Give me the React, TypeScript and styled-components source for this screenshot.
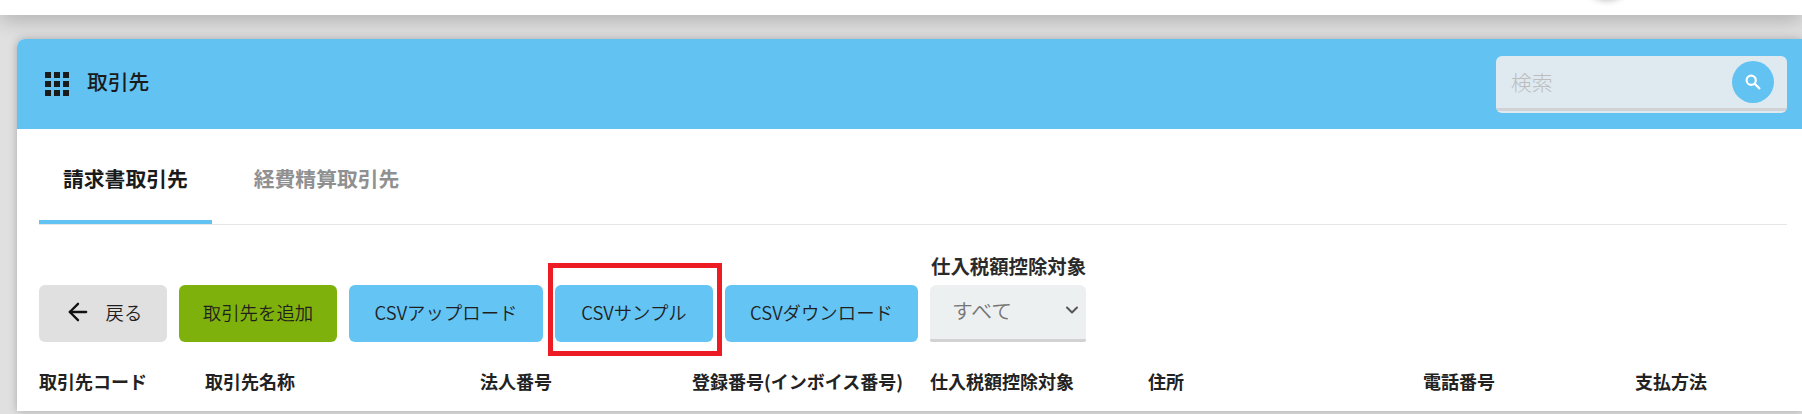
import styled, { createGlobalStyle } from 'styled-components'
import { ArrowLeft, ChevronDown } from 'lucide-react'

const GlobalStyle = createGlobalStyle`
    html, body {
        margin: 0;
        padding: 0;
        width: 1802px;
        height: 414px;
        overflow: hidden;
        background: #e0e0e0;
        font-family: "Noto Sans CJK JP", "Noto Sans", sans-serif;
    }
`

const Page = styled.div`
    position: relative;
    width: 1802px;
    height: 414px;
    overflow: hidden;
`

const TopBar = styled.div`
    position: relative;
    height: 15px;
    background: #fff;
    box-shadow: 0 2px 22px rgba(0, 0, 0, 0.32);
    z-index: 1;
`

const AvatarShadow = styled.div`
    position: absolute;
    left: 1583px;
    top: -50px;
    width: 48px;
    height: 48px;
    border-radius: 50%;
    background: #fff;
    box-shadow: 0 2px 7px rgba(0, 0, 0, 0.3);
`

const Card = styled.div`
    margin: 24px 0 0 17px;
    background: #fff;
    border-radius: 8px 0 0 0;
    box-shadow: 0 0 8px rgba(0, 0, 0, 0.25);
    height: 372px;
`

const CardHeader = styled.div`
    display: flex;
    align-items: center;
    justify-content: space-between;
    height: 90px;
    padding: 0 15px 0 28px;
    background: #62c2f2;
    border-radius: 8px 0 0 0;
`

const HeaderTitle = styled.div`
    display: flex;
    align-items: center;
    gap: 18px;
    font-size: 20.8px;
    font-weight: 500;
    line-height: 24px;
    color: #1a1a1a;
`

const TitleText = styled.span`
    margin-top: -6px;
`

const SearchBox = styled.div`
    display: flex;
    align-items: center;
    justify-content: space-between;
    box-sizing: border-box;
    width: 291px;
    height: 57px;
    padding: 0 13px 5px 15px;
    background: #dfe9f0;
    border-radius: 6px;
    position: relative;
    overflow: hidden;

    &::after {
        content: '';
        position: absolute;
        left: 0;
        right: 0;
        bottom: 2px;
        height: 3px;
        background: #d0d2d6;
    }
`

const SearchPlaceholder = styled.span`
    font-size: 20.8px;
    font-weight: 300;
    color: #bdbdbd;
`

const SearchButton = styled.div`
    display: flex;
    align-items: center;
    justify-content: center;
    width: 42px;
    height: 42px;
    border-radius: 50%;
    background: #62c2f2;
`

const CardBody = styled.div`
    padding: 0 15px 0 22px;
`

const Tabs = styled.div`
    display: flex;
    gap: 18px;
    height: 96px;
    box-sizing: border-box;
    border-bottom: 1px solid #e6e6e6;
`

const Tab = styled.div<{ $active?: boolean }>`
    display: flex;
    align-items: center;
    box-sizing: border-box;
    height: 95px;
    padding: 6px 24px 0;
    font-size: 20.8px;
    font-weight: 700;
    color: ${(p) => (p.$active ? '#1a1a1a' : '#909090')};
    border-bottom: 4px solid ${(p) => (p.$active ? '#62c2f2' : 'transparent')};
    border-radius: 3px 3px 0 0;
`

const Toolbar = styled.div`
    display: flex;
    align-items: flex-end;
    gap: 12px;
    height: 117px;
`

const Button = styled.div<{ $bg: string; $width: number }>`
    display: flex;
    align-items: center;
    justify-content: center;
    gap: 14px;
    box-sizing: border-box;
    width: ${(p) => p.$width}px;
    height: 57px;
    padding-bottom: 4px;
    background: ${(p) => p.$bg};
    border-radius: 6px;
    font-size: 18.4px;
    font-weight: 350;
    color: #1f1f1f;
`

const SelectField = styled.div`
    display: flex;
    flex-direction: column;
    width: 156px;
`

const SelectLabel = styled.div`
    font-size: 19.4px;
    font-weight: 700;
    line-height: 24px;
    margin: 0 0 7px 1px;
    white-space: nowrap;
    color: #2a2a2a;
`

const Select = styled.div`
    display: flex;
    align-items: center;
    justify-content: space-between;
    box-sizing: border-box;
    height: 57px;
    padding: 0 4px 4px 22px;
    background: #edf0f1;
    border-bottom: 3px solid #d2d2d2;
    border-radius: 6px 6px 2px 2px;
    font-size: 20.8px;
    font-weight: 350;
    color: #757575;
`

const HeaderRow = styled.div`
    display: grid;
    grid-template-columns: 166px 275px 212px 238px 218px 275px 212px 1fr;
    align-items: center;
    height: 77px;
    font-size: 18px;
    font-weight: 700;
    color: #222;
    white-space: nowrap;
`

const Highlight = styled.div`
    position: absolute;
    left: 548px;
    top: 263px;
    width: 174px;
    height: 93px;
    box-sizing: border-box;
    border: 5px solid #ed1c24;
    pointer-events: none;
`

const columns = ['取引先コード', '取引先名称', '法人番号', '登録番号(インボイス番号)', '仕入税額控除対象', '住所', '電話番号', '支払方法']

const AppsIcon = () => (
    <svg width="24" height="24" viewBox="0 0 24 24" fill="#1a1a1a">
        {[0, 9, 18].map((y) =>
            [0, 9, 18].map((x) => <rect key={`${x}-${y}`} x={x} y={y} width="6" height="6" />),
        )}
    </svg>
)

const SearchIcon = () => (
    <svg width="20" height="20" viewBox="0 0 20 20" fill="none" stroke="#fff" strokeWidth="2.2">
        <circle cx="8.2" cy="8.2" r="4.6" />
        <path d="M11.6 11.6 L17 17" />
    </svg>
)

const App = () => {
    return (
        <Page>
            <GlobalStyle />
            <TopBar>
                <AvatarShadow />
            </TopBar>
            <Card>
                <CardHeader>
                    <HeaderTitle>
                        <AppsIcon />
                        <TitleText>取引先</TitleText>
                    </HeaderTitle>
                    <SearchBox>
                        <SearchPlaceholder>検索</SearchPlaceholder>
                        <SearchButton>
                            <SearchIcon />
                        </SearchButton>
                    </SearchBox>
                </CardHeader>
                <CardBody>
                    <Tabs>
                        <Tab $active>請求書取引先</Tab>
                        <Tab>経費精算取引先</Tab>
                    </Tabs>
                    <Toolbar>
                        <Button $bg="#e0e0e0" $width={128}>
                            <ArrowLeft size={28} color="#111" strokeWidth={2} />
                            戻る
                        </Button>
                        <Button $bg="#7fb10d" $width={158}>取引先を追加</Button>
                        <Button $bg="#64c4f4" $width={194}>CSVアップロード</Button>
                        <Button $bg="#64c4f4" $width={158}>CSVサンプル</Button>
                        <Button $bg="#64c4f4" $width={193}>CSVダウンロード</Button>
                        <SelectField>
                            <SelectLabel>仕入税額控除対象</SelectLabel>
                            <Select>
                                すべて
                                <ChevronDown size={20} color="#555" strokeWidth={2.4} />
                            </Select>
                        </SelectField>
                    </Toolbar>
                    <HeaderRow>
                        {columns.map((c) => (
                            <div key={c}>{c}</div>
                        ))}
                    </HeaderRow>
                </CardBody>
            </Card>
            <Highlight />
        </Page>
    )
}

export default App
